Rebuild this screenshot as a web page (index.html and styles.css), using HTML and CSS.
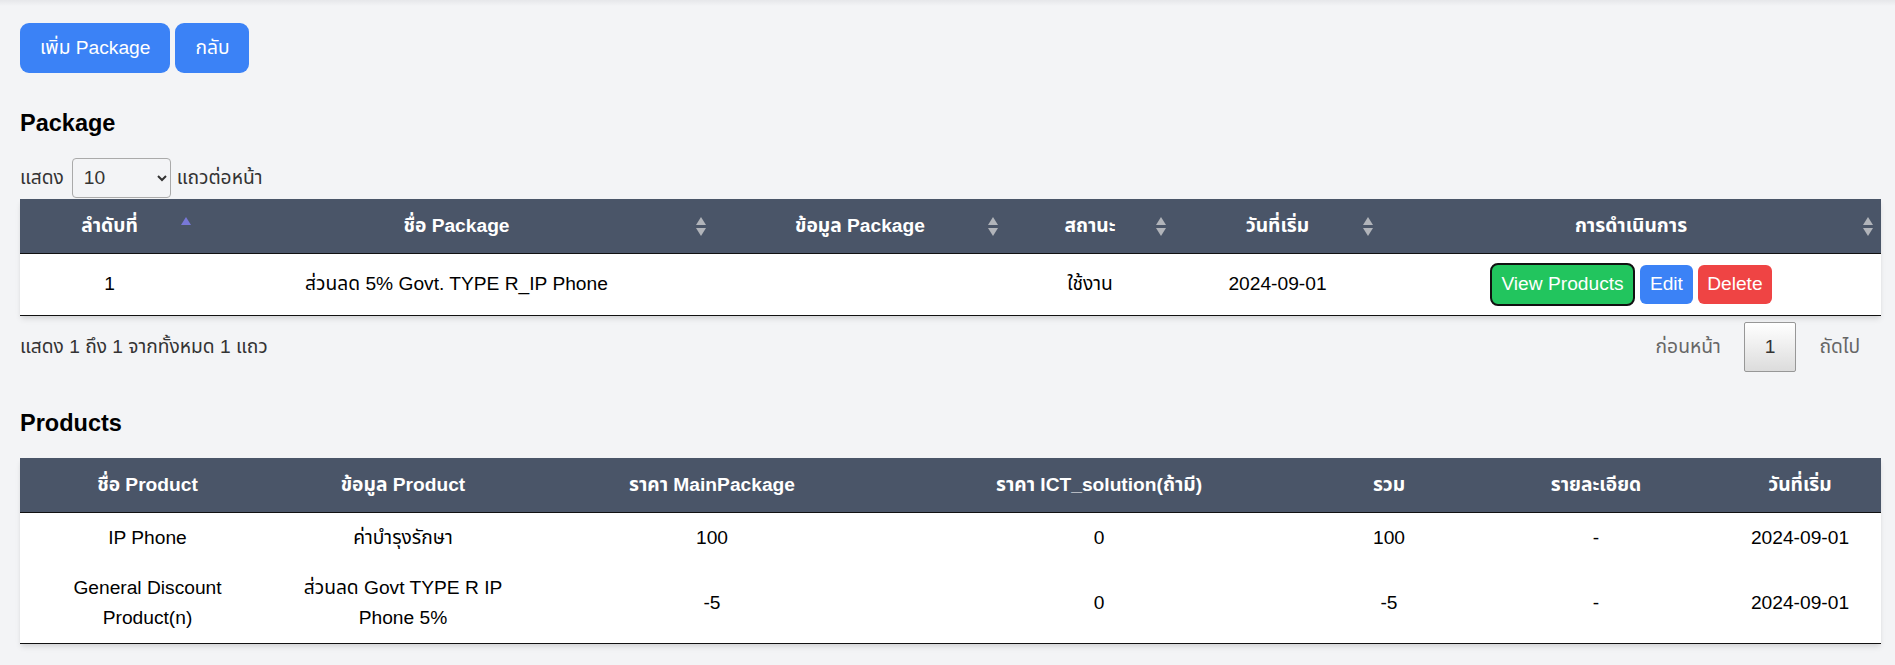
FILE: index.html
```html
<!DOCTYPE html>
<html lang="th">
<head>
<meta charset="utf-8">
<title>Package</title>
<link rel="stylesheet" href="styles.css">
</head>
<body>
<main class="page">
  <div class="top-actions">
    <button class="btn btn-blue">เพิ่ม Package</button>
    <button class="btn btn-blue">กลับ</button>
  </div>

  <h2 class="section-title">Package</h2>

  <div class="dt-wrapper">
    <div class="dt-length">
      <span>แสดง</span>
      <select class="dt-select">
        <option>10</option>
        <option>25</option>
        <option>50</option>
        <option>100</option>
      </select>
      <span>แถวต่อหน้า</span>
    </div>

    <table class="data-table package-table">
      <colgroup>
        <col class="pc1"><col class="pc2"><col class="pc3"><col class="pc4"><col class="pc5"><col class="pc6">
      </colgroup>
      <thead>
        <tr>
          <th class="sortable">ลำดับที่<span class="sort-icon"><svg width="10" height="19" viewBox="0 0 10 19"><polygon points="5,0 10,8 0,8" fill="#7878d8"/></svg></span></th>
          <th class="sortable">ชื่อ Package<span class="sort-icon"><svg width="10" height="19" viewBox="0 0 10 19"><polygon points="5,0 10,8 0,8" fill="#b1b4ba"/><polygon points="0,11 10,11 5,19" fill="#b1b4ba"/></svg></span></th>
          <th class="sortable">ข้อมูล Package<span class="sort-icon"><svg width="10" height="19" viewBox="0 0 10 19"><polygon points="5,0 10,8 0,8" fill="#b1b4ba"/><polygon points="0,11 10,11 5,19" fill="#b1b4ba"/></svg></span></th>
          <th class="sortable">สถานะ<span class="sort-icon"><svg width="10" height="19" viewBox="0 0 10 19"><polygon points="5,0 10,8 0,8" fill="#b1b4ba"/><polygon points="0,11 10,11 5,19" fill="#b1b4ba"/></svg></span></th>
          <th class="sortable">วันที่เริ่ม<span class="sort-icon"><svg width="10" height="19" viewBox="0 0 10 19"><polygon points="5,0 10,8 0,8" fill="#b1b4ba"/><polygon points="0,11 10,11 5,19" fill="#b1b4ba"/></svg></span></th>
          <th class="sortable">การดำเนินการ<span class="sort-icon"><svg width="10" height="19" viewBox="0 0 10 19"><polygon points="5,0 10,8 0,8" fill="#b1b4ba"/><polygon points="0,11 10,11 5,19" fill="#b1b4ba"/></svg></span></th>
        </tr>
      </thead>
      <tbody>
        <tr>
          <td>1</td>
          <td>ส่วนลด 5% Govt. TYPE R_IP Phone</td>
          <td></td>
          <td>ใช้งาน</td>
          <td>2024-09-01</td>
          <td>
            <div class="row-actions">
              <button class="btn-sm btn-green btn-focus">View Products</button>
              <button class="btn-sm btn-blue">Edit</button>
              <button class="btn-sm btn-red">Delete</button>
            </div>
          </td>
        </tr>
      </tbody>
    </table>

    <div class="dt-footer">
      <div class="dt-info">แสดง 1 ถึง 1 จากทั้งหมด 1 แถว</div>
      <div class="dt-paginate">
        <span class="page-btn disabled">ก่อนหน้า</span>
        <span class="page-btn current">1</span>
        <span class="page-btn disabled">ถัดไป</span>
      </div>
    </div>
  </div>

  <h2 class="section-title products-title">Products</h2>

  <table class="data-table products-table">
    <colgroup>
      <col class="qc1"><col class="qc2"><col class="qc3"><col class="qc4"><col class="qc5"><col class="qc6"><col class="qc7">
    </colgroup>
    <thead>
      <tr>
        <th>ชื่อ Product</th>
        <th>ข้อมูล Product</th>
        <th>ราคา MainPackage</th>
        <th>ราคา ICT_solution(ถ้ามี)</th>
        <th>รวม</th>
        <th>รายละเอียด</th>
        <th>วันที่เริ่ม</th>
      </tr>
    </thead>
    <tbody>
      <tr>
        <td>IP Phone</td>
        <td>ค่าบำรุงรักษา</td>
        <td>100</td>
        <td>0</td>
        <td>100</td>
        <td>-</td>
        <td>2024-09-01</td>
      </tr>
      <tr>
        <td>General Discount Product(n)</td>
        <td>ส่วนลด Govt TYPE R IP Phone 5%</td>
        <td>-5</td>
        <td>0</td>
        <td>-5</td>
        <td>-</td>
        <td>2024-09-01</td>
      </tr>
    </tbody>
  </table>
</main>
</body>
</html>
```

FILE: styles.css
```css
* { box-sizing: border-box; }

html, body {
  margin: 0;
  padding: 0;
}

body {
  background: linear-gradient(#e6e7ea 0, #f3f4f6 6px) no-repeat top left / 100% 6px, #f3f4f6;
  font-family: "Liberation Sans", "Waree", "Noto Sans Thai", "Noto Sans", "Loma", "Garuda", sans-serif;
  font-size: 19.2px;
  line-height: 28.8px;
  color: #000;
  min-height: 665px;
}

.page {
  padding: 23px 14px 0 20px;
}

/* top buttons */
.top-actions {
  display: flex;
  gap: 5px;
}

.btn {
  font: inherit;
  border: 0;
  color: #fff;
  padding: 10.6px 20px;
  border-radius: 9px;
  cursor: pointer;
}

.btn-blue { background: #3b82f6; color: #fff; }
.btn-green { background: #22c55e; color: #fff; }
.btn-red { background: #ef4444; color: #fff; }

.section-title {
  font-size: 23.5px;
  line-height: 36px;
  font-weight: bold;
  margin: 32px 0 17px;
}

.products-title {
  margin-top: 33px;
}

/* length control */
.dt-length {
  display: flex;
  align-items: center;
  height: 40px;
  margin-bottom: 1px;
  color: #333;
}

.dt-select {
  width: 99px;
  height: 40px;
  margin: 0 6px 0 8px;
  padding: 0 0 0 7px;
  font: inherit;
  color: #333;
  background-color: transparent;
  border: 1px solid #aaa;
  border-radius: 4px;
}

/* tables */
.data-table {
  width: 100%;
  border-collapse: collapse;
  table-layout: fixed;
  background: #fff;
  box-shadow: 0 4px 6px -1px rgba(0, 0, 0, 0.1), 0 2px 4px -1px rgba(0, 0, 0, 0.06);
  border-bottom: 1px solid #111;
}

.data-table th {
  background: #4a5568;
  color: #fff;
  font-weight: bold;
  text-align: center;
  padding: 13px 12px 12px;
  border-bottom: 1px solid #111;
}

.data-table th.sortable {
  position: relative;
}

.sort-icon {
  position: absolute;
  right: 8px;
  top: 50%;
  margin-top: -9px;
  width: 10px;
  height: 19px;
  display: block;
  line-height: 0;
}

.package-table td {
  text-align: center;
  padding: 9.6px 12px;
}

.pc1 { width: 179px; }
.pc2 { width: 515px; }
.pc3 { width: 292px; }
.pc4 { width: 168px; }
.pc5 { width: 207px; }
.pc6 { width: 500px; }

.row-actions {
  display: inline-flex;
  align-items: center;
  gap: 5px;
  vertical-align: middle;
}

.btn-sm {
  font: inherit;
  border: 0;
  padding: 4.8px 9.6px;
  border-radius: 6px;
  cursor: pointer;
}

.btn-focus {
  border: 2px solid #111;
  border-radius: 8px;
}

/* footer */
.dt-footer {
  display: flex;
  justify-content: space-between;
  align-items: center;
  padding-top: 6px;
  color: #333;
}

.dt-paginate {
  display: flex;
  align-items: center;
}

.page-btn {
  display: inline-block;
  padding: 9.6px 20px;
  margin-left: 2px;
  border: 1px solid transparent;
  border-radius: 2px;
  color: #333;
}

.page-btn.disabled {
  color: #666;
}

.page-btn.current {
  border: 1px solid #979797;
  background: linear-gradient(to bottom, #fff 0%, #dcdcdc 100%);
  color: #333;
}

/* products */
.qc1 { width: 255px; }
.qc2 { width: 256px; }
.qc3 { width: 362px; }
.qc4 { width: 412px; }
.qc5 { width: 168px; }
.qc6 { width: 246px; }
.qc7 { width: 162px; }

.products-table td {
  text-align: center;
  padding: 10px 19.2px;
  line-height: 30px;
}
```
